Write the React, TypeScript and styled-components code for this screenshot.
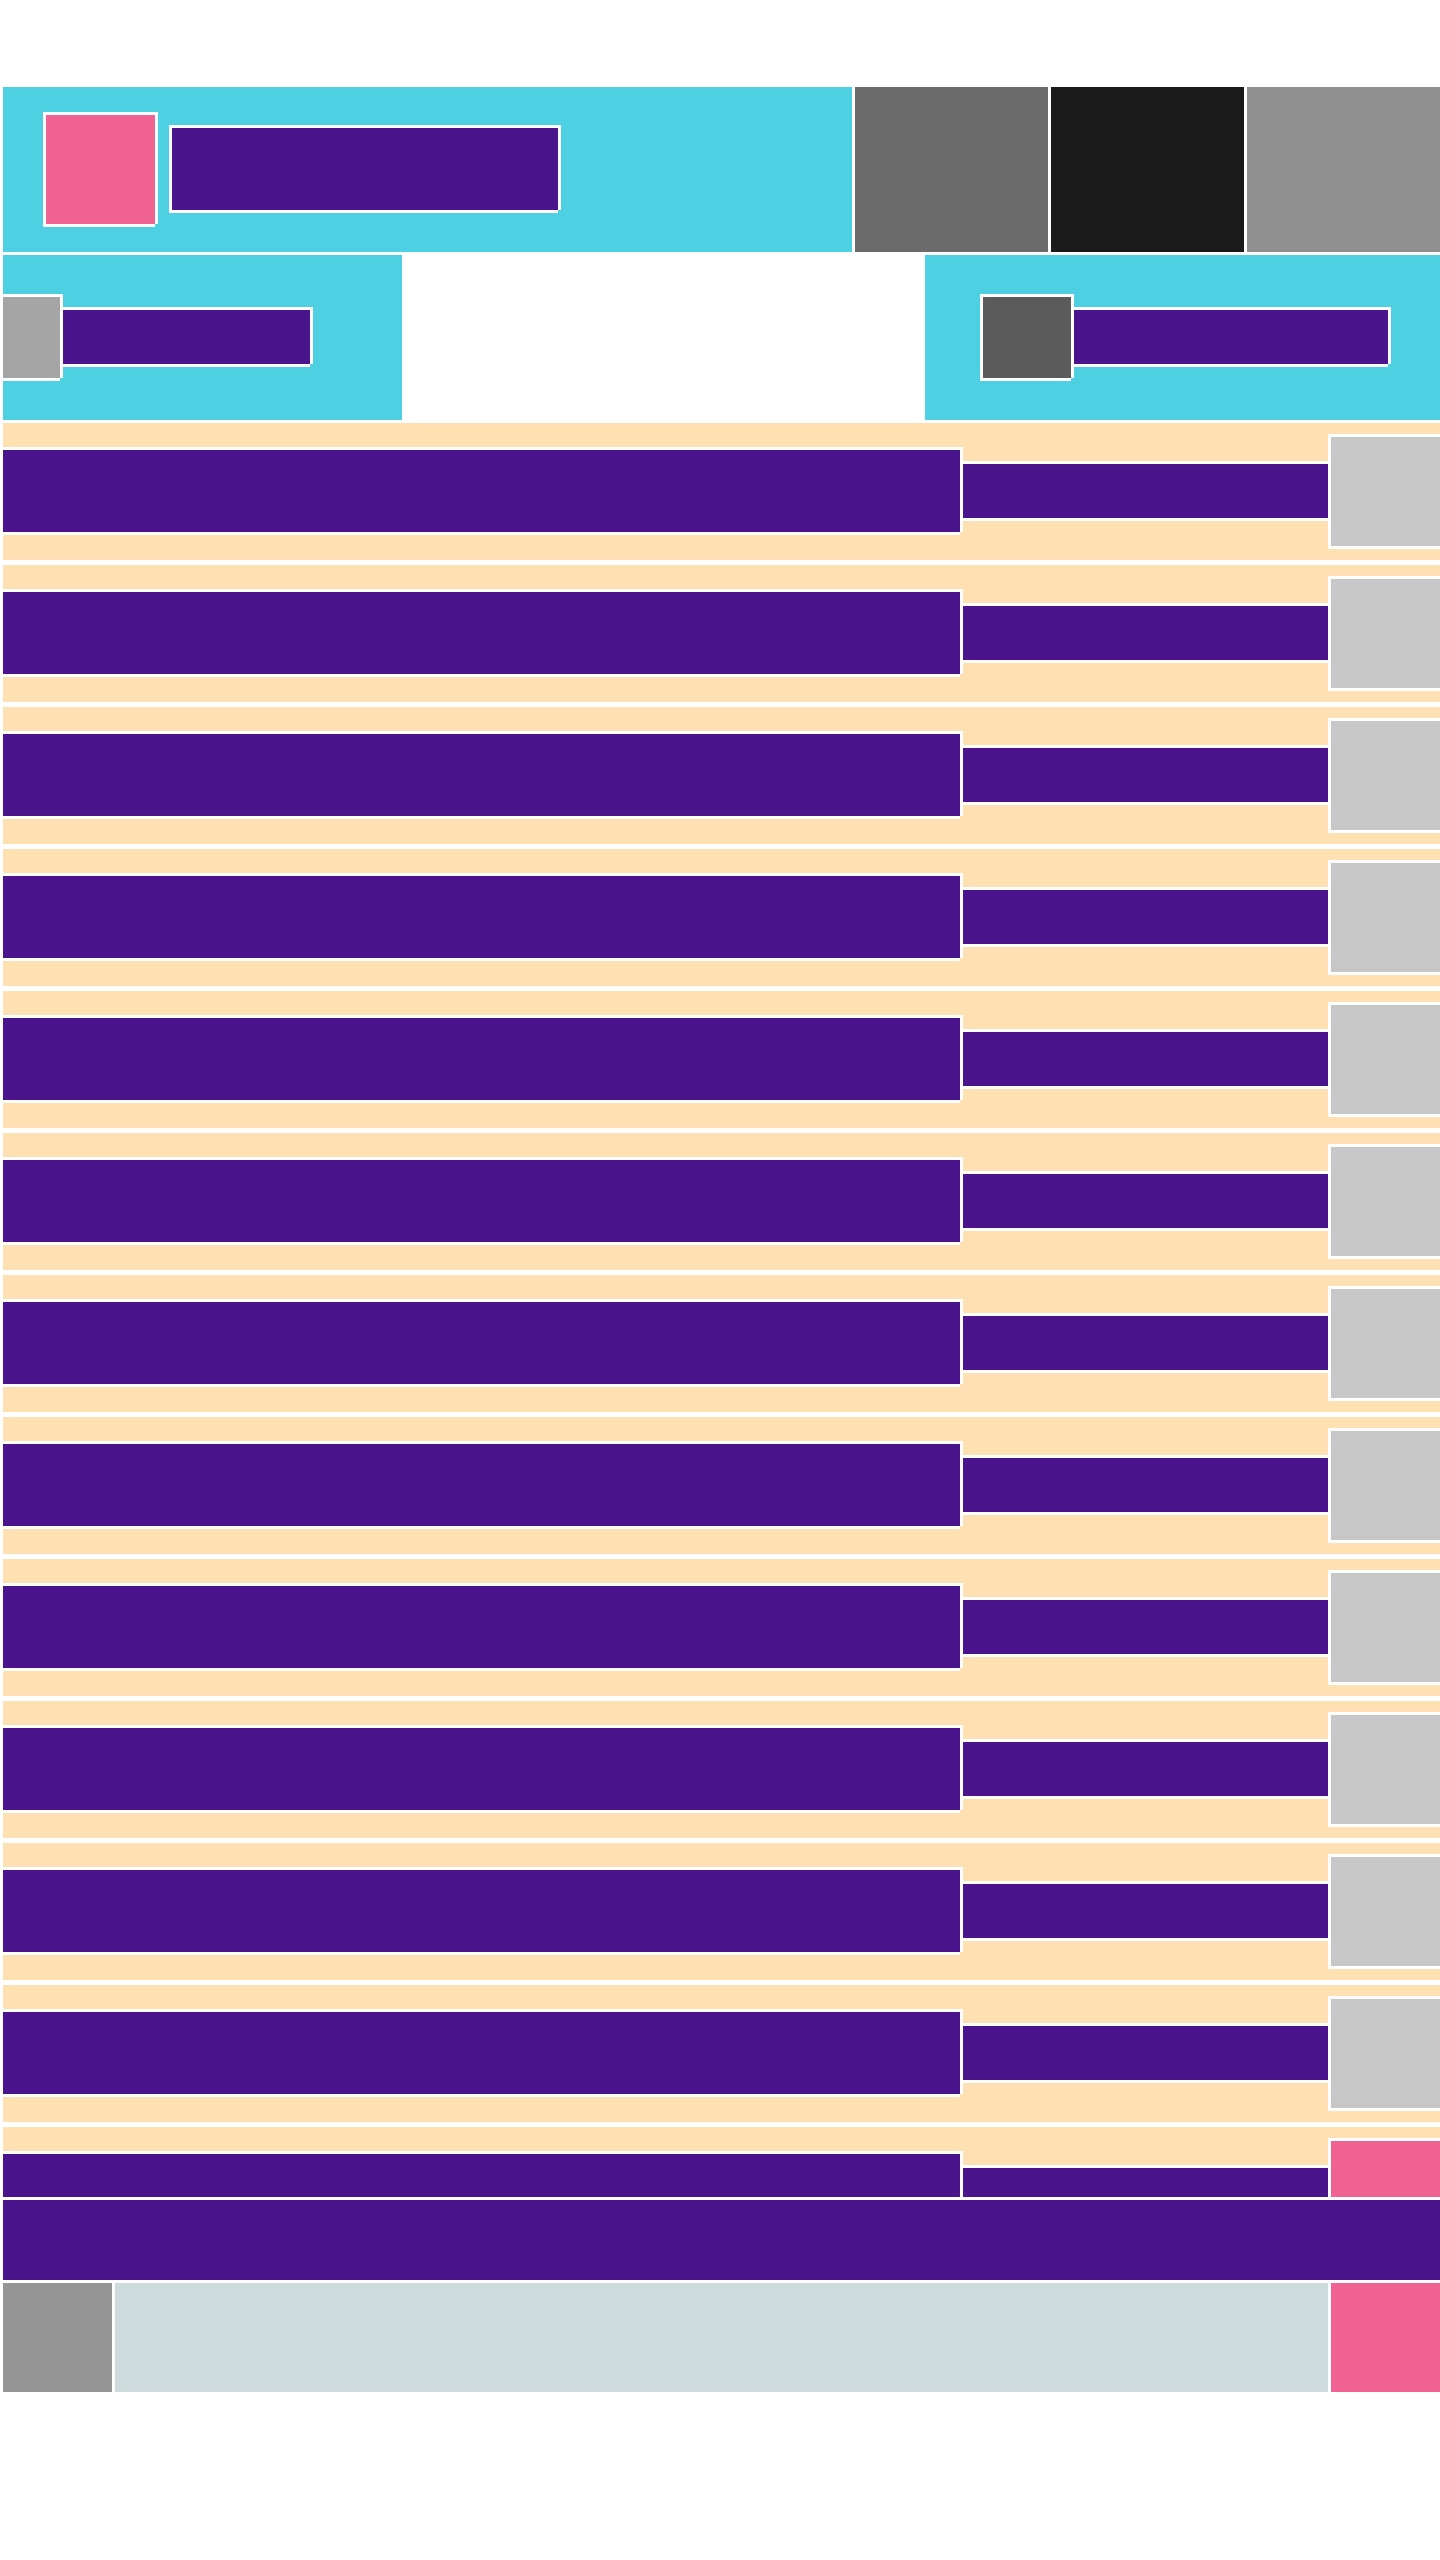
import React from "react";
import styled, { createGlobalStyle, css } from "styled-components";

const GlobalStyle = createGlobalStyle`
  * { box-sizing: border-box; }
  html, body { margin: 0; padding: 0; background: #ffffff; }
  body { font-family: "Liberation Sans", Arial, sans-serif; }
`;

const CYAN = "#4dd0e1";
const PURPLE = "#4a148c";
const PINK = "#f06292";
const TAN = "#ffe0b2";

const framed = css`
  flex: none;
  border-top: 3px solid #ffffff;
  border-left: 3px solid #ffffff;
  box-shadow: 3px 0 0 0 #ffffff, 0 3px 0 0 #ffffff;
`;

const Page = styled.div`
  width: 1440px;
  padding: 87px 0 0 3px;
  display: flex;
  flex-direction: column;
  gap: 3px;
`;

/* ---------- header ---------- */
const Header = styled.header`
  display: flex;
  gap: 3px;
  height: 165px;
`;

const Brand = styled.div`
  flex: none;
  width: 849px;
  background: ${CYAN};
  display: flex;
  align-items: flex-start;
  padding-left: 40px;
`;

const Logo = styled.div`
  ${framed};
  width: 112px;
  height: 112px;
  margin-top: 25px;
  background: ${PINK};
`;

const Title = styled.div`
  ${framed};
  width: 389px;
  height: 85px;
  margin-top: 38px;
  margin-left: 14px;
  background: ${PURPLE};
`;

const Swatch = styled.div<{ $color: string }>`
  flex: none;
  width: 193px;
  background: ${(p) => p.$color};
`;

/* ---------- second row ---------- */
const Toolbar = styled.div`
  display: flex;
  gap: 3px;
  height: 165px;
`;

const Panel = styled.div<{ $width: number; $pad: number }>`
  flex: none;
  width: ${(p) => p.$width}px;
  padding-left: ${(p) => p.$pad}px;
  background: ${CYAN};
  display: flex;
  align-items: flex-start;
`;

const Spacer = styled.div`
  flex: none;
  width: 517px;
`;

const Avatar = styled.div<{ $width: number; $color: string; $shift?: number }>`
  ${framed};
  width: ${(p) => p.$width}px;
  height: 84px;
  margin-top: 39px;
  margin-left: ${(p) => p.$shift ?? 0}px;
  background: ${(p) => p.$color};
`;

const Label = styled.div<{ $width: number }>`
  ${framed};
  width: ${(p) => p.$width}px;
  height: 57px;
  margin-top: 52px;
  background: ${PURPLE};
`;

/* ---------- list ---------- */
const List = styled.section`
  height: 1774px;
  overflow: hidden;
  display: flex;
  flex-direction: column;
  gap: 5px;
`;

const Item = styled.div`
  flex: none;
  height: 137px;
  background: ${TAN};
  display: flex;
  align-items: flex-start;
`;

const ItemMain = styled.div`
  ${framed};
  width: 960px;
  height: 85px;
  margin-left: -3px;
  margin-top: 24px;
  background: ${PURPLE};
`;

const ItemMeta = styled.div`
  ${framed};
  width: 368px;
  height: 57px;
  margin-top: 38px;
  background: ${PURPLE};
`;

const Thumb = styled.div<{ $color: string }>`
  ${framed};
  width: 112px;
  height: 112px;
  margin-top: 11px;
  background: ${(p) => p.$color};
`;

/* ---------- bottom ---------- */
const Banner = styled.div`
  height: 80px;
  background: ${PURPLE};
`;

const Footer = styled.footer`
  display: flex;
  gap: 3px;
  height: 109px;
`;

const FooterSide = styled.div<{ $color: string }>`
  flex: none;
  width: 109px;
  background: ${(p) => p.$color};
`;

const FooterBody = styled.div`
  flex: 1;
  background: #cddbdc;
`;

const items = Array.from({ length: 13 }, (_, i) => i);

export default function App() {
  return (
    <>
      <GlobalStyle />
      <Page>
        <Header>
          <Brand>
            <Logo />
            <Title />
          </Brand>
          <Swatch $color="#6b6b6b" />
          <Swatch $color="#1a1a1a" />
          <Swatch $color="#8f8f8f" />
        </Header>

        <Toolbar>
          <Panel $width={399} $pad={0}>
            <Avatar $width={60} $color="#a5a5a5" $shift={-3} />
            <Label $width={250} />
          </Panel>
          <Spacer />
          <Panel $width={515} $pad={55}>
            <Avatar $width={91} $color="#5b5b5b" />
            <Label $width={317} />
          </Panel>
        </Toolbar>

        <List>
          {items.map((i) => (
            <Item key={i}>
              <ItemMain />
              <ItemMeta />
              <Thumb $color={i === 12 ? PINK : "#c7c7c7"} />
            </Item>
          ))}
        </List>

        <Banner />

        <Footer>
          <FooterSide $color="#959595" />
          <FooterBody />
          <FooterSide $color={PINK} />
        </Footer>
      </Page>
    </>
  );
}
